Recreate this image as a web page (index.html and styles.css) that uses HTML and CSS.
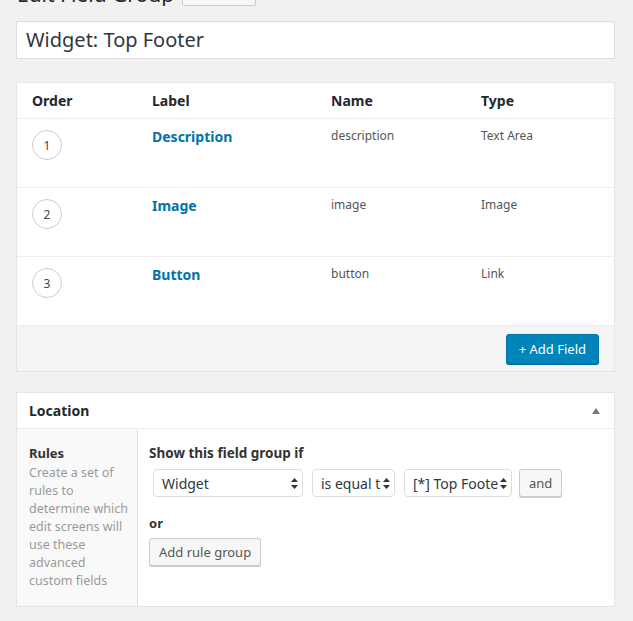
FILE: index.html
```html
<!DOCTYPE html>
<html>
<head>
<title>Edit Field Group</title>
<link rel="stylesheet" href="styles.css">
</head>
<body>
  <div class="wrap">
    <div class="page-head">
      <h1>Edit Field Group</h1>
      <span class="add-new">Add New</span>
    </div>

    <div class="title-box">Widget: Top Footer</div>

    <div class="panel fields">
      <div class="row head">
        <div class="c-order">Order</div>
        <div class="c-label">Label</div>
        <div class="c-name">Name</div>
        <div class="c-type">Type</div>
      </div>
      <div class="row field">
        <div class="c-order"><span class="num">1</span></div>
        <div class="c-label"><a href="#">Description</a></div>
        <div class="c-name">description</div>
        <div class="c-type">Text Area</div>
      </div>
      <div class="row field">
        <div class="c-order"><span class="num">2</span></div>
        <div class="c-label"><a href="#">Image</a></div>
        <div class="c-name">image</div>
        <div class="c-type">Image</div>
      </div>
      <div class="row field">
        <div class="c-order"><span class="num">3</span></div>
        <div class="c-label"><a href="#">Button</a></div>
        <div class="c-name">button</div>
        <div class="c-type">Link</div>
      </div>
      <div class="fields-foot">
        <span class="btn-primary">+ Add Field</span>
      </div>
    </div>

    <div class="panel location">
      <div class="panel-head">
        <h2>Location</h2>
        <span class="toggle"></span>
      </div>
      <div class="loc-body">
        <div class="loc-side">
          <div class="side-title">Rules</div>
          <p>Create a set of rules to determine which edit screens will use these advanced custom fields</p>
        </div>
        <div class="loc-main">
          <div class="rule-title">Show this field group if</div>
          <div class="rule">
            <div class="select s-param">Widget<svg class="arr" width="7" height="11" viewBox="0 0 7 11"><path d="M3.5 0 L7 4 L0 4 Z M0 7 L7 7 L3.5 11 Z" fill="#333"/></svg></div>
            <div class="select s-op">is equal t<svg class="arr" width="7" height="11" viewBox="0 0 7 11"><path d="M3.5 0 L7 4 L0 4 Z M0 7 L7 7 L3.5 11 Z" fill="#333"/></svg></div>
            <div class="select s-val">[*] Top Foote<svg class="arr" width="7" height="11" viewBox="0 0 7 11"><path d="M3.5 0 L7 4 L0 4 Z M0 7 L7 7 L3.5 11 Z" fill="#333"/></svg></div>
            <span class="btn and">and</span>
          </div>
          <div class="or">or</div>
          <span class="btn">Add rule group</span>
        </div>
      </div>
    </div>
  </div>
</body>
</html>
```

FILE: styles.css
```css
body { margin:0; background:#f1f1f1; font-family:"Noto Sans", Arial, sans-serif; color:#23282d; }
.wrap { padding:0 18px 0 16px; }

.page-head { display:flex; align-items:flex-end; height:6px; overflow:hidden; }
.page-head h1 { margin:0 0 1px 1px; font-size:21px; font-weight:400; color:#23282d; line-height:1; }
.add-new { margin-left:8px; width:72px; height:28px; border:1px solid #ccc; border-radius:2px; background:#f7f7f7; font-size:13px; color:transparent; }

.title-box { margin-top:15px; height:36px; border:1px solid #ddd; background:#fff; font-size:20px; line-height:36px; padding-left:9px; color:#32373c; box-shadow:inset 0 1px 2px rgba(0,0,0,.04); }

.panel { background:#fff; border:1px solid #e5e5e5; }
.fields { margin-top:23px; }
.row { display:flex; }
.row.head { height:35px; align-items:center; border-bottom:1px solid #eee; font-size:14px; font-weight:700; }
.row.field { height:68px; border-bottom:1px solid #eee; font-size:12px; color:#555; }
.c-order { width:135px; padding-left:15px; box-sizing:border-box; }
.c-label { width:179px; }
.c-name { width:150px; }
.c-type { flex:1; }
.row.field > div { padding-top:8px; }
.row.field .c-order { padding-top:11px; }
.c-label a { color:#0073aa; font-weight:700; font-size:14px; text-decoration:none; }
.num { display:flex; align-items:center; justify-content:center; width:28px; height:28px; border:1px solid #ccc; border-radius:50%; font-size:12px; color:#444; }

.fields-foot { background:#f4f4f4; height:45px; display:flex; align-items:center; justify-content:flex-end; padding-right:15px; }
.btn-primary { background:#0085ba; border:1px solid #0073aa; border-radius:3px; color:#fff; font-size:13px; height:28px; line-height:28px; padding:0 12px; box-shadow:0 1px 0 #006799; }

.location { margin-top:20px; }
.panel-head { height:35px; display:flex; align-items:center; justify-content:space-between; padding:0 14px 0 12px; border-bottom:1px solid #eee; }
.panel-head h2 { margin:0; font-size:14px; font-weight:700; }
.toggle { width:0; height:0; border-left:4px solid transparent; border-right:4px solid transparent; border-bottom:6px solid #777; }

.loc-body { display:flex; }
.loc-side { width:108px; padding:15px 0 16px 12px; background:#f9f9f9; border-right:1px solid #e1e1e1; }
.side-title { font-size:13px; font-weight:700; color:#333; line-height:18px; }
.loc-side p { margin:2px 0 0; font-size:12.5px; line-height:18px; color:#999; width:100px; }
.loc-main { flex:1; padding:14px 11px; }
.rule-title { font-size:13.5px; font-weight:700; line-height:20px; color:#333; }
.rule { display:flex; align-items:center; gap:9px; margin:6px 0 0 4px; }
.select { display:flex; align-items:center; justify-content:space-between; height:26px; border:1px solid #ddd; border-radius:4px; background:#fff; font-size:14px; padding:0 4px 0 8px; color:#32373c; white-space:nowrap; overflow:hidden; box-sizing:content-box; }
.s-param { width:136px; }
.s-op { width:69px; }
.s-val { width:94px; }
.arr { flex:none; }
.btn { display:inline-block; height:26px; line-height:26px; padding:0 10px; border:1px solid #ccc; border-radius:3px; background:#f7f7f7; box-shadow:0 1px 0 #ccc; font-size:13px; color:#555; }
.rule .and { margin-left:-2px; padding:0 9px; }
.or { font-size:13px; font-weight:700; color:#333; margin-top:17px; line-height:18px; }
.loc-main .or + .btn { margin-top:6px; padding:0 9px; }
```
